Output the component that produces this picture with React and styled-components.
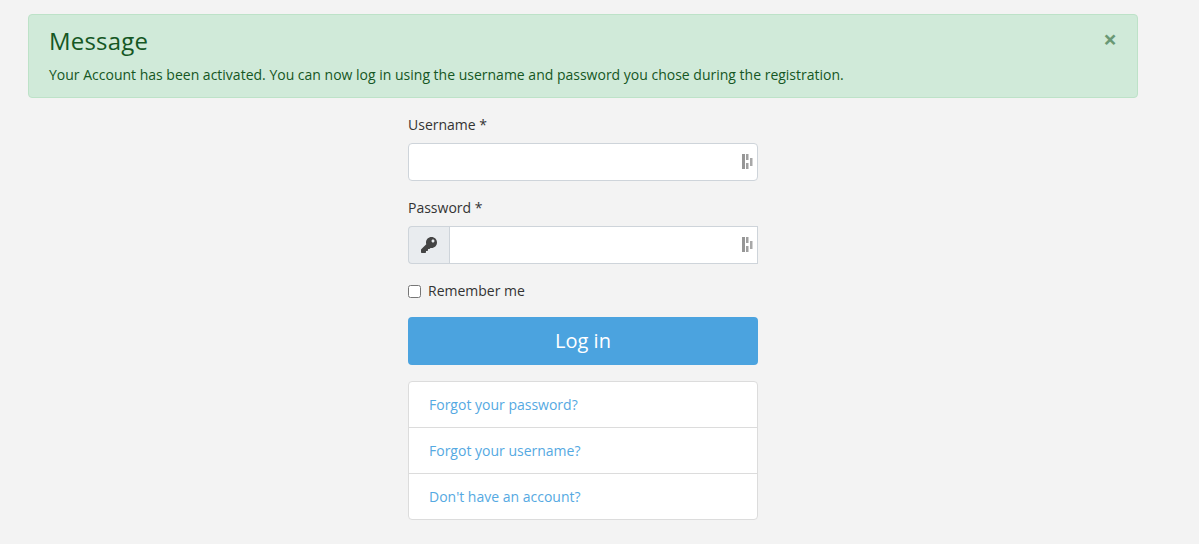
import React from 'react'
import styled, { createGlobalStyle } from 'styled-components'
import { FaKey } from 'react-icons/fa'

const GlobalStyle = createGlobalStyle`
  html, body {
    margin: 0;
    background: #f3f3f3;
    font-family: "Open Sans", "Liberation Sans", sans-serif;
    color: #333;
  }
  * {
    box-sizing: border-box;
  }
`

const Page = styled.div`
  padding: 14px 61px 0 28px;
  height: 544px;
  overflow: hidden;
`

const Alert = styled.div`
  position: relative;
  height: 84px;
  padding: 10px 20px;
  background: #d0ead9;
  border: 1px solid #bde2c8;
  border-radius: 4px;
  color: #155724;
`

const AlertHeading = styled.h4`
  margin: 0 0 7px;
  font-size: 24px;
  line-height: 32px;
  font-weight: 400;
  letter-spacing: 0.2px;
`

const AlertText = styled.div`
  font-size: 14px;
  line-height: 21px;
`

const CloseButton = styled.button`
  position: absolute;
  top: 9px;
  right: 20px;
  width: 26px;
  height: 30px;
  padding: 0;
  text-align: right;
  background: none;
  border: 0;
  font-family: "Open Sans", sans-serif;
  font-size: 24px;
  line-height: 30px;
  font-weight: 700;
  color: #155724;
  opacity: 0.55;
`

const Form = styled.form`
  width: 350px;
  margin: 16px auto 0;
`

const Field = styled.div`
  margin-bottom: 16px;
`

const Label = styled.label`
  display: block;
  margin-bottom: 8px;
  font-size: 14px;
  line-height: 21px;
`

const InputGroup = styled.div`
  display: flex;
  height: 38px;
`

const Addon = styled.span`
  display: flex;
  align-items: center;
  justify-content: center;
  flex: 0 0 41px;
  background: #e9ecef;
  border: 1px solid #ced4da;
  border-right: 0;
  border-radius: 4px 0 0 4px;
  color: #444;
  font-size: 16px;
`

const InputWrap = styled.div`
  position: relative;
  flex: 1;
`

const Input = styled.input`
  display: block;
  width: 100%;
  height: 38px;
  padding: 6px 12px;
  background: #fff;
  border: 1px solid #ced4da;
  border-radius: ${props => (props.$grouped ? '0' : '4px')};
  outline: none;
`

const ManagerIcon = styled.svg`
  position: absolute;
  top: 11px;
  right: 5px;
  width: 11px;
  height: 15px;
`

const RememberRow = styled.div`
  display: flex;
  align-items: center;
  height: 21px;
  margin-bottom: 16px;
  font-size: 14px;
`

const Checkbox = styled.input`
  width: 13px;
  height: 13px;
  margin: 2px 7px 0 0;
`

const LoginButton = styled.button`
  display: block;
  width: 100%;
  height: 48px;
  padding: 0;
  background: #4ba3df;
  border: 0;
  border-radius: 4px;
  color: #fff;
  font-family: inherit;
  font-size: 20px;
  line-height: 48px;
`

const LinkList = styled.ul`
  margin: 16px 0 0;
  padding: 0;
  list-style: none;
  background: #fff;
  border: 1px solid #dcdcdc;
  border-radius: 4px;
`

const LinkItem = styled.li`
  height: 45px;
  padding: 0 20px;
  font-size: 14px;
  line-height: 45px;
  color: #55a9e2;
  & + & {
    height: 46px;
    border-top: 1px solid #dcdcdc;
  }
`

const PasswordManager = () => (
  <ManagerIcon viewBox="0 0 11 15">
    <rect x="0" y="0" width="3" height="15" fill="#969696" />
    <rect x="4" y="0" width="2.5" height="6" fill="#a0a0a0" />
    <rect x="4" y="9" width="2.5" height="6" fill="#a0a0a0" />
    <rect x="8" y="4" width="2.5" height="8" fill="#a8a8a8" />
  </ManagerIcon>
)

const links = ['Forgot your password?', 'Forgot your username?', "Don't have an account?"]

export default function App() {
  return (
    <Page>
      <GlobalStyle />
      <Alert>
        <CloseButton type="button">×</CloseButton>
        <AlertHeading>Message</AlertHeading>
        <AlertText>
          Your Account has been activated. You can now log in using the username and password you chose during the registration.
        </AlertText>
      </Alert>
      <Form>
        <Field>
          <Label>Username *</Label>
          <InputGroup>
            <InputWrap>
              <Input type="text" />
              <PasswordManager />
            </InputWrap>
          </InputGroup>
        </Field>
        <Field>
          <Label>Password *</Label>
          <InputGroup>
            <Addon><FaKey /></Addon>
            <InputWrap>
              <Input type="password" $grouped />
              <PasswordManager />
            </InputWrap>
          </InputGroup>
        </Field>
        <RememberRow>
          <Checkbox type="checkbox" />
          Remember me
        </RememberRow>
        <LoginButton type="button">Log in</LoginButton>
        <LinkList>
          {links.map(link => (
            <LinkItem key={link}>{link}</LinkItem>
          ))}
        </LinkList>
      </Form>
    </Page>
  )
}
